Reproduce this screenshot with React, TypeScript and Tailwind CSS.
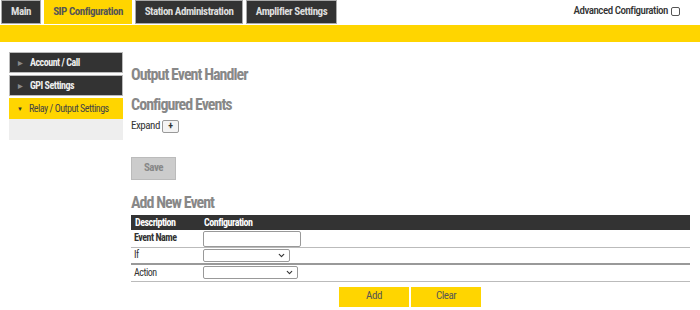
import { ChevronDown } from "lucide-react";

const font = { fontFamily: '"Roboto Condensed", Roboto, sans-serif' };

const tabs = [
  { label: "Main", w: "w-[40px]", active: false },
  { label: "SIP Configuration", w: "w-[88px]", active: true },
  { label: "Station Administration", w: "w-[108px]", active: false },
  { label: "Amplifier Settings", w: "w-[91px]", active: false },
];

const sideItems = [
  { label: "Account / Call", active: false },
  { label: "GPI Settings", active: false },
  { label: "Relay / Output Settings", active: true },
];

export default function App() {
  return (
    <div className="w-[700px] h-[310px] bg-white overflow-hidden text-[#333] tracking-[-0.03em]" style={font}>
      {/* Top tabs */}
      <div className="flex items-start justify-between h-[25px]">
        <div className="flex gap-[3px] pl-[1px]">
          {tabs.map((t) => (
            <div
              key={t.label}
              className={`${t.w} h-[24px] flex items-center justify-center text-[11px] font-bold ${
                t.active ? "bg-[#ffd500] text-[#555]" : "bg-[#333] text-[#ddd] border border-[#aaa]"
              }`}
            >
              {t.label}
            </div>
          ))}
        </div>
        <div className="flex items-center gap-[3px] pr-[20px] pt-[3px] text-[11px] font-medium text-[#333]">
          <span>Advanced Configuration</span>
          <span className="w-[9px] h-[9px] border border-[#555] rounded-[2px] bg-white" />
        </div>
      </div>
      <div className="h-[17px] bg-[#ffd500]" />

      <div className="flex pt-[10px]">
        {/* Sidebar */}
        <div className="w-[114px] ml-[9px] flex flex-col">
          {sideItems.map((s) => (
            <div
              key={s.label}
              className={`h-[21px] flex items-center text-[10px] mb-[2px] ${
                s.active ? "bg-[#ffd500] text-[#444]" : "bg-[#333] text-[#eee] font-bold border border-[#bbb]"
              }`}
            >
              <span className={`w-[20px] pl-[8px] text-[6px] ${s.active ? "text-[#333]" : "text-[#888]"}`}>
                {s.active ? "▼" : "▶"}
              </span>
              {s.label}
            </div>
          ))}
          <div className="h-[21px] bg-[#eee] -mt-[2px]" />
        </div>

        {/* Main */}
        <div className="ml-[8px] flex-1 pr-[10px]">
          <div className="mt-[14px] text-[16px] font-bold text-[#888] leading-[18px] tracking-[-0.06em]">
            Output Event Handler
          </div>
          <div className="mt-[12px] text-[16px] font-bold text-[#888] leading-[18px] tracking-[-0.06em]">
            Configured Events
          </div>
          <div className="mt-[4px] flex items-center gap-[2px] text-[11px]">
            <span>Expand</span>
            <span className="w-[17px] h-[13px] border border-[#999] rounded-[2px] bg-[#f4f4f4] flex items-center justify-center text-[10px] font-bold leading-none">
              +
            </span>
          </div>
          <button className="mt-[22px] w-[45px] h-[23px] bg-[#ccc] border border-[#bbb] text-[11px] font-bold text-[#888]">
            Save
          </button>
          <div className="mt-[14px] text-[16px] font-bold text-[#888] leading-[18px] tracking-[-0.06em]">
            Add New Event
          </div>

          <div className="mt-[3px] w-[559px]">
            <div className="h-[15px] bg-[#333] flex items-center text-[10px] font-bold text-white">
              <span className="w-[73px] pl-[4px]">Description</span>
              <span>Configuration</span>
            </div>
            <div className="h-[18px] flex items-center border-b border-[#bbb] text-[10px] leading-[12px]">
              <span className="w-[72px] pl-[3px] font-bold">Event Name</span>
              <span className="w-[98px] h-[16px] border border-[#999] rounded-[2px] mt-[1px]" />
            </div>
            <div className="h-[17px] flex items-center border-b-[2px] border-[#999] text-[10px] leading-[12px]">
              <span className="w-[72px] pl-[3px]">If</span>
              <span className="w-[87px] h-[13px] border border-[#999] rounded-[2px] flex items-center justify-end pr-[3px]">
                <ChevronDown size={9} strokeWidth={3} />
              </span>
            </div>
            <div className="h-[17px] flex items-center border-b border-[#bbb] text-[10px] leading-[12px]">
              <span className="w-[72px] pl-[3px]">Action</span>
              <span className="w-[95px] h-[13px] border border-[#999] rounded-[2px] flex items-center justify-end pr-[3px]">
                <ChevronDown size={9} strokeWidth={3} />
              </span>
            </div>
          </div>

          <div className="mt-[5px] flex gap-[2px] ml-[208px]">
            <button className="w-[70px] h-[20px] bg-[#ffd500] text-[11px] text-[#555]">Add</button>
            <button className="w-[70px] h-[20px] bg-[#ffd500] text-[11px] text-[#555]">Clear</button>
          </div>
        </div>
      </div>
    </div>
  );
}
